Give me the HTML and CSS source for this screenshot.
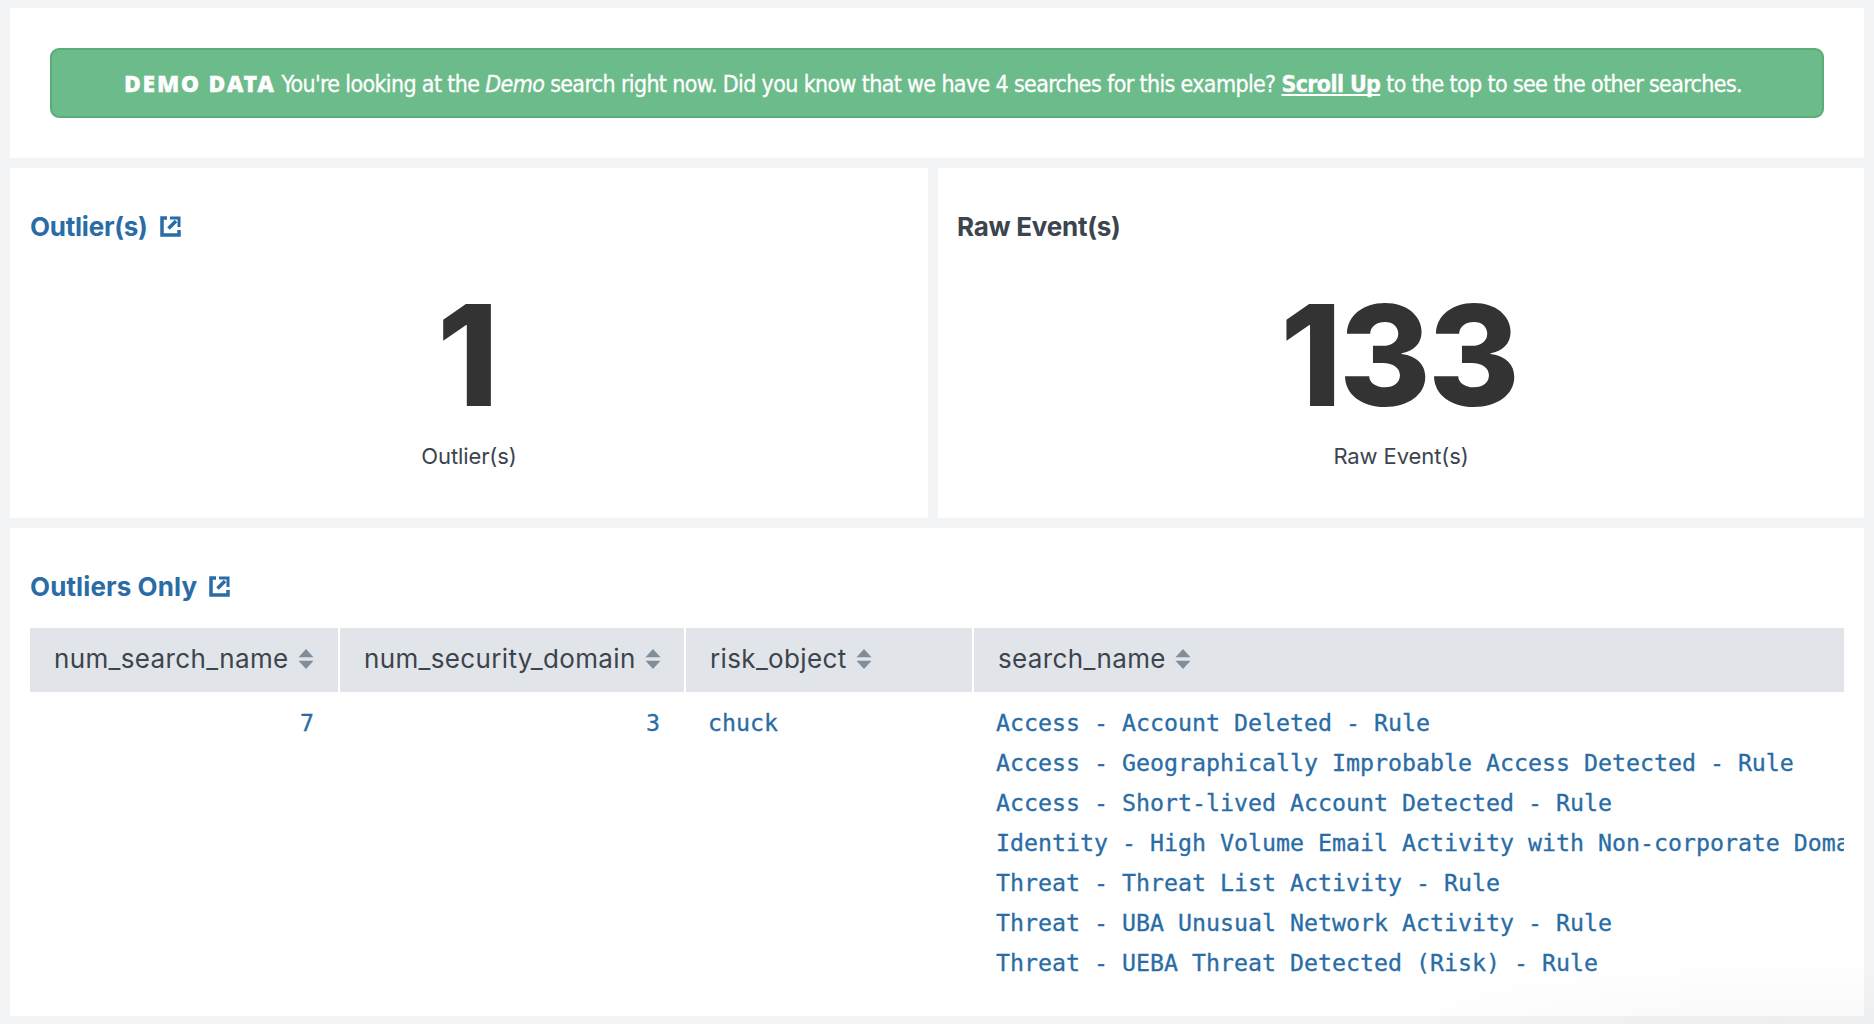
FILE: index.html
```
<!DOCTYPE html>
<html lang="en">
<head>
<meta charset="utf-8">
<title>Outliers</title>
<link rel="stylesheet" href="styles.css">
</head>
<body>
<svg class="defs" width="0" height="0" aria-hidden="true">
  <symbol id="popout" viewBox="0 0 21 21"><path d="M7 2H2V19H19V14" fill="none" stroke="currentColor" stroke-width="3.500"/><path d="M8.500 12.500L16 5" fill="none" stroke="currentColor" stroke-width="3.500"/><path d="M10 .5H20.500V11H17.500V3.500H10Z" fill="currentColor"/></symbol>
  <symbol id="sort" viewBox="0 0 16 20"><path d="M8 0L15.500 8.200H0.500ZM8 20L0.500 11.800H15.500Z" fill="currentColor"/></symbol>
</svg>
<main class="dashboard">
  <section class="panel notice">
    <div class="alert"><p class="msg"><strong class="tag">DEMO DATA</strong> You're looking at the <em>Demo</em> search right now. Did you know that we have 4 searches for this example? <a class="up">Scroll Up</a> to the top to see the other searches.</p></div>
  </section>
  <div class="row">
    <section class="panel single">
      <h2 class="title link">Outlier(s)<svg class="pop"><use href="#popout"/></svg></h2>
      <div class="value">1</div>
      <div class="label">Outlier(s)</div>
    </section>
    <section class="panel single">
      <h2 class="title">Raw Event(s)</h2>
      <div class="value">133</div>
      <div class="label">Raw Event(s)</div>
    </section>
  </div>
  <section class="panel table-panel">
    <h2 class="title link wide">Outliers Only<svg class="pop"><use href="#popout"/></svg></h2>
    <div class="grid head">
      <div class="th">num_search_name<svg class="sort"><use href="#sort"/></svg></div>
      <div class="th">num_security_domain<svg class="sort"><use href="#sort"/></svg></div>
      <div class="th">risk_object<svg class="sort"><use href="#sort"/></svg></div>
      <div class="th">search_name<svg class="sort"><use href="#sort"/></svg></div>
    </div>
    <div class="grid body">
      <div class="td num">7</div>
      <div class="td num">3</div>
      <div class="td">chuck</div>
      <ul class="td names">
        <li>Access - Account Deleted - Rule</li>
        <li>Access - Geographically Improbable Access Detected - Rule</li>
        <li>Access - Short-lived Account Detected - Rule</li>
        <li>Identity - High Volume Email Activity with Non-corporate Domains - Rule</li>
        <li>Threat - Threat List Activity - Rule</li>
        <li>Threat - UBA Unusual Network Activity - Rule</li>
        <li>Threat - UEBA Threat Detected (Risk) - Rule</li>
      </ul>
    </div>
  </section>
</main>
</body>
</html>
```
FILE: styles.css
```
* { box-sizing: border-box; }
body { margin: 0; background: #f2f4f5; color: #3c444d; font-family: "Inter", sans-serif; }
.defs { display: none; }
.dashboard { position: relative; display: flex; flex-direction: column; gap: 10px; height: 1024px; padding: 8px 10px; overflow: hidden; }
/* soft shade in the bottom right corner */
.dashboard::after { content: ""; position: absolute; right: 0; bottom: 0; width: 500px; height: 60px; background: radial-gradient(ellipse at 80% 100%, rgba(0,0,0,.022), transparent 80%); pointer-events: none; }
.panel { background: #fff; }
.notice { height: 150px; padding: 40px; }
.alert { height: 70px; border: 2px solid #5cac76; border-radius: 9px; background: #6cbb8a; color: #fff; display: flex; align-items: center; padding-left: 72px; }
.msg { margin: 0; font: 23px/32px "DejaVu Sans Condensed", "DejaVu Sans", sans-serif; font-stretch: condensed; white-space: nowrap; letter-spacing: -0.64px; -webkit-text-stroke: 0.3px #fff; }
.tag { font-family: "Noto Sans", sans-serif; font-weight: 900; letter-spacing: 1.7px; }
.up { font-weight: 700; text-decoration: underline; text-decoration-thickness: 2px; text-decoration-skip-ink: none; text-underline-offset: 2px; }
.row { display: grid; grid-template-columns: 918px 926px; gap: 10px; height: 350px; }
.single { padding: 40px 20px; }
.title { margin: 0 0 0 -1px; height: 38px; font: 700 26px/38px "Inter", sans-serif; display: flex; align-items: center; letter-spacing: -0.25px; }
.link { color: #2a6ca5; margin-left: 0; }
.wide { letter-spacing: 0.1px; }
.pop { width: 21px; height: 21px; margin: 0 0 1px 12px; }
.value { text-align: center; font: 800 140px/150px "Inter", sans-serif; letter-spacing: -3px; color: #333; margin-top: 34px; padding-right: 5px; }
.label { text-align: center; font-size: 22px; line-height: 32px; letter-spacing: -0.1px; margin-top: 10px; }
.table-panel { height: 488px; padding: 40px 20px 0; }
.grid { display: grid; grid-template-columns: 308px 344px 286px 870px; gap: 2px; }
.head { margin-top: 22px; height: 64px; }
.th { background: #e1e5ea; display: flex; align-items: center; padding: 0 0 2px 24px; font-size: 26px; line-height: 38px; letter-spacing: 0.35px; }
.sort { width: 16px; height: 20px; margin-left: 9px; color: #818d99; }
.td { margin: 0; padding: 11px 22px; font: 23.25px/40px "DejaVu Sans Mono", monospace; color: #2a6ca5; -webkit-text-stroke: 0.3px #2a6ca5; }
.num { text-align: right; padding-right: 24px; }
.names { list-style: none; white-space: nowrap; overflow: hidden; padding-right: 0; }
```
